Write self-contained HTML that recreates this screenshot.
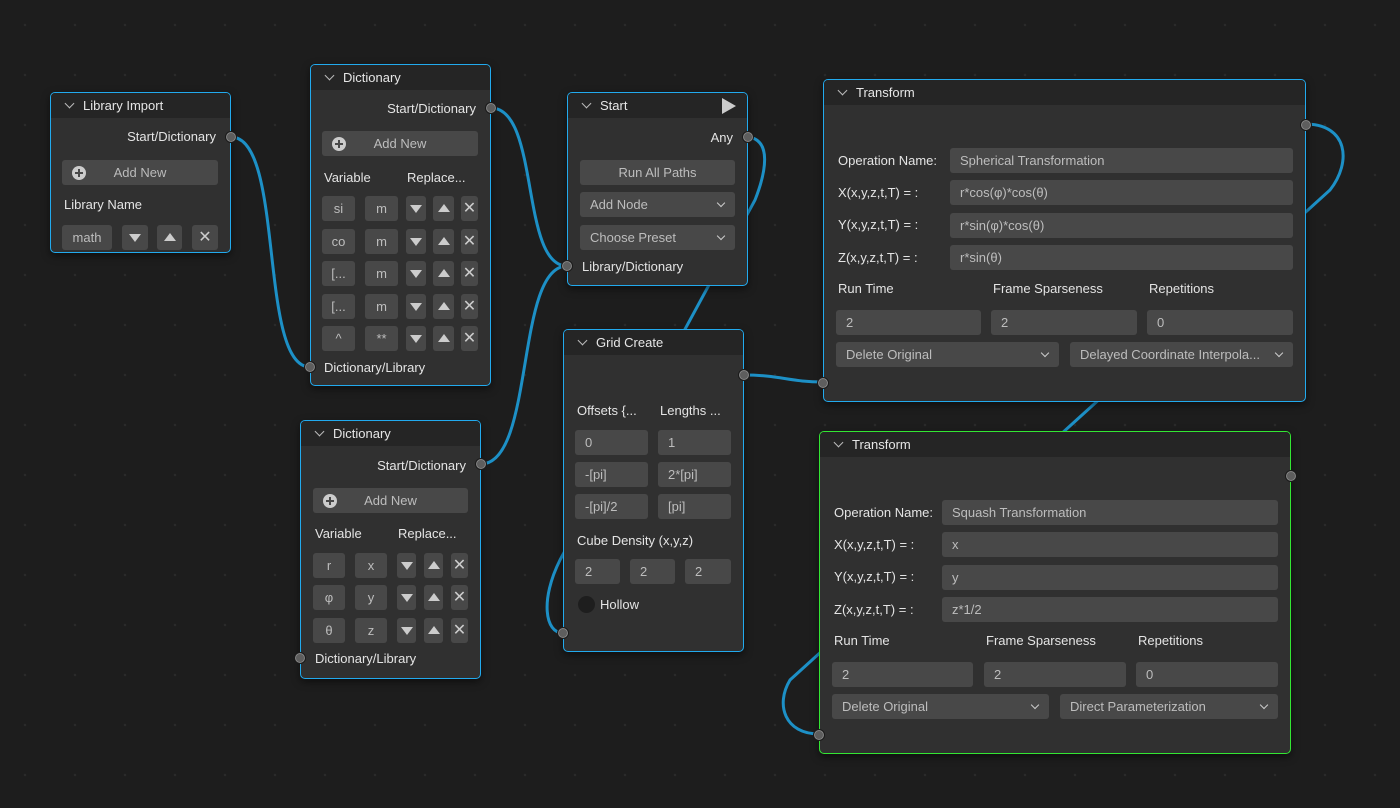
<!DOCTYPE html>
<html><head><meta charset="utf-8"><style>
*{box-sizing:border-box;margin:0;padding:0}
body{width:1400px;height:808px;overflow:hidden;background:#1d1d1d;background-image:radial-gradient(circle,#2a2a2a 1px,transparent 1.5px);background-size:50px 50px;background-position:0 0;font-family:"Liberation Sans","DejaVu Sans",sans-serif;font-size:13px;color:#e4e4e4;position:relative}
.n{position:absolute;background:#303030;border:1.5px solid #22aaee;border-radius:5px;box-shadow:0 3px 8px rgba(0,0,0,.5);overflow:visible}
.n.g{border-color:#33e633}
.h{position:absolute;left:0;right:0;top:0;height:25px;background:#252525;border-radius:4px 4px 0 0;line-height:25px;padding-left:32px;color:#e6e6e6}
.h:before{content:"";position:absolute;left:15px;top:7px;width:6px;height:6px;border-right:1.3px solid #bbb;border-bottom:1.3px solid #bbb;transform:rotate(45deg)}
.a{position:absolute;white-space:nowrap}
.f{position:absolute;background:#484848;border-radius:3px;height:25px;line-height:25px;color:#bdbdbd;padding-left:10px;white-space:nowrap;overflow:hidden}
.c{text-align:center;padding-left:0}
.dd:after{content:"";position:absolute;right:11px;top:8px;width:5px;height:5px;border-right:1.3px solid #ccc;border-bottom:1.3px solid #ccc;transform:rotate(45deg)}
.s{position:absolute;width:12px;height:12px;border-radius:50%;background:#5e5e5e;border:1.5px solid #1a1a1a;box-shadow:0 0 0 1px #888 inset}
.dn:after{content:"";position:absolute;left:50%;top:9px;margin-left:-6px;border-left:6px solid transparent;border-right:6px solid transparent;border-top:8px solid #ccc}
.up:after{content:"";position:absolute;left:50%;top:8px;margin-left:-6px;border-left:6px solid transparent;border-right:6px solid transparent;border-bottom:8px solid #ccc}
.x:after{content:"✕";position:absolute;left:0;right:0;text-align:center;color:#ccc;font-size:16px}
.plus{position:absolute;left:10px;top:6px;width:14px;height:14px;border-radius:50%;background:#ccc}
.plus:before,.plus:after{content:"";position:absolute;background:#484848;left:3px;top:6px;width:8px;height:2px}
.plus:after{left:6px;top:3px;width:2px;height:8px}
</style></head><body>
<svg width="1400" height="808" style="position:absolute;left:0;top:0" fill="none" stroke="#1d90c6" stroke-width="3">
<path d="M231,137 C285,137 258,367 310,367"/>
<path d="M491,108 C540,108 520,266 567,266"/>
<path d="M481,464 C535,464 515,266 567,266"/>
<path d="M748,137 C772,140 766,172 755,200 L560,560 C540,600 545,633 563,633"/>
<path d="M744,375 C780,375 790,382 823,382"/>
<path d="M1305,124 C1348,124 1352,162 1330,190 L790,680 C775,705 785,734 819,734"/>
</svg>

<!-- Library Import -->
<div class="n" style="left:50px;top:92px;width:181px;height:161px">
<div class="h">Library Import</div>
<div class="a" style="right:14px;top:36px">Start/Dictionary</div>
<div class="f c" style="left:11px;top:67px;width:156px;color:#bbb">Add New<span class="plus"></span></div>
<div class="a" style="left:13px;top:104px">Library Name</div>
<div class="f c" style="left:11px;top:132px;width:50px">math</div>
<div class="f dn" style="left:71px;top:132px;width:26px"></div>
<div class="f up" style="left:106px;top:132px;width:25px"></div>
<div class="f x" style="left:141px;top:132px;width:26px"></div>
<div class="s" style="left:174px;top:38px"></div>
</div>

<!-- Dictionary 1 -->
<div class="n" style="left:310px;top:64px;width:181px;height:322px">
<div class="h">Dictionary</div>
<div class="a" style="right:14px;top:36px">Start/Dictionary</div>
<div class="f c" style="left:11px;top:66px;width:156px">Add New<span class="plus"></span></div>
<div class="a" style="left:13px;top:105px">Variable</div>
<div class="a" style="left:96px;top:105px">Replace...</div>
<div class="f c" style="left:11px;top:131px;width:33px">si</div><div class="f c" style="left:54px;top:131px;width:33px">m</div><div class="f dn" style="left:95px;top:131px;width:20px"></div><div class="f up" style="left:122px;top:131px;width:21px"></div><div class="f x" style="left:150px;top:131px;width:17px"></div>
<div class="f c" style="left:11px;top:164px;width:33px">co</div><div class="f c" style="left:54px;top:164px;width:33px">m</div><div class="f dn" style="left:95px;top:164px;width:20px"></div><div class="f up" style="left:122px;top:164px;width:21px"></div><div class="f x" style="left:150px;top:164px;width:17px"></div>
<div class="f c" style="left:11px;top:196px;width:33px">[...</div><div class="f c" style="left:54px;top:196px;width:33px">m</div><div class="f dn" style="left:95px;top:196px;width:20px"></div><div class="f up" style="left:122px;top:196px;width:21px"></div><div class="f x" style="left:150px;top:196px;width:17px"></div>
<div class="f c" style="left:11px;top:229px;width:33px">[...</div><div class="f c" style="left:54px;top:229px;width:33px">m</div><div class="f dn" style="left:95px;top:229px;width:20px"></div><div class="f up" style="left:122px;top:229px;width:21px"></div><div class="f x" style="left:150px;top:229px;width:17px"></div>
<div class="f c" style="left:11px;top:261px;width:33px">^</div><div class="f c" style="left:54px;top:261px;width:33px">**</div><div class="f dn" style="left:95px;top:261px;width:20px"></div><div class="f up" style="left:122px;top:261px;width:21px"></div><div class="f x" style="left:150px;top:261px;width:17px"></div>
<div class="a" style="left:13px;top:295px">Dictionary/Library</div>
<div class="s" style="left:174px;top:37px"></div>
<div class="s" style="left:-7px;top:296px"></div>
</div>

<!-- Dictionary 2 -->
<div class="n" style="left:300px;top:420px;width:181px;height:259px">
<div class="h">Dictionary</div>
<div class="a" style="right:14px;top:37px">Start/Dictionary</div>
<div class="f c" style="left:12px;top:67px;width:155px">Add New<span class="plus"></span></div>
<div class="a" style="left:14px;top:105px">Variable</div>
<div class="a" style="left:97px;top:105px">Replace...</div>
<div class="f c" style="left:12px;top:132px;width:32px">r</div><div class="f c" style="left:54px;top:132px;width:32px">x</div><div class="f dn" style="left:96px;top:132px;width:19px"></div><div class="f up" style="left:123px;top:132px;width:19px"></div><div class="f x" style="left:150px;top:132px;width:17px"></div>
<div class="f c" style="left:12px;top:164px;width:32px">φ</div><div class="f c" style="left:54px;top:164px;width:32px">y</div><div class="f dn" style="left:96px;top:164px;width:19px"></div><div class="f up" style="left:123px;top:164px;width:19px"></div><div class="f x" style="left:150px;top:164px;width:17px"></div>
<div class="f c" style="left:12px;top:197px;width:32px">θ</div><div class="f c" style="left:54px;top:197px;width:32px">z</div><div class="f dn" style="left:96px;top:197px;width:19px"></div><div class="f up" style="left:123px;top:197px;width:19px"></div><div class="f x" style="left:150px;top:197px;width:17px"></div>
<div class="a" style="left:14px;top:230px">Dictionary/Library</div>
<div class="s" style="left:174px;top:37px"></div>
<div class="s" style="left:-7px;top:231px"></div>
</div>

<!-- Start -->
<div class="n" style="left:567px;top:92px;width:181px;height:194px">
<div class="h">Start</div>
<svg style="position:absolute;left:154px;top:5px" width="14" height="16"><path d="M0,0 L14,8 L0,16Z" fill="#ccc"/></svg>
<div class="a" style="right:14px;top:37px">Any</div>
<div class="f c" style="left:12px;top:67px;width:155px">Run All Paths</div>
<div class="f dd" style="left:12px;top:99px;width:155px">Add Node</div>
<div class="f dd" style="left:12px;top:132px;width:155px">Choose Preset</div>
<div class="a" style="left:14px;top:166px">Library/Dictionary</div>
<div class="s" style="left:174px;top:38px"></div>
<div class="s" style="left:-7px;top:167px"></div>
</div>

<!-- Grid Create -->
<div class="n" style="left:563px;top:329px;width:181px;height:323px">
<div class="h">Grid Create</div>
<div class="a" style="left:13px;top:73px">Offsets {...</div>
<div class="a" style="left:96px;top:73px">Lengths ...</div>
<div class="f" style="left:11px;top:100px;width:73px">0</div><div class="f" style="left:94px;top:100px;width:73px">1</div>
<div class="f" style="left:11px;top:132px;width:73px">-[pi]</div><div class="f" style="left:94px;top:132px;width:73px">2*[pi]</div>
<div class="f" style="left:11px;top:164px;width:73px">-[pi]/2</div><div class="f" style="left:94px;top:164px;width:73px">[pi]</div>
<div class="a" style="left:13px;top:203px">Cube Density (x,y,z)</div>
<div class="f" style="left:11px;top:229px;width:45px">2</div><div class="f" style="left:66px;top:229px;width:45px">2</div><div class="f" style="left:121px;top:229px;width:46px">2</div>
<div style="position:absolute;left:14px;top:266px;width:17px;height:17px;border-radius:50%;background:#1e1e1e"></div>
<div class="a" style="left:36px;top:267px">Hollow</div>
<div class="s" style="left:174px;top:39px"></div>
<div class="s" style="left:-7px;top:297px"></div>
</div>

<!-- Transform 1 -->
<div class="n" style="left:823px;top:79px;width:483px;height:323px">
<div class="h">Transform</div>
<div class="a" style="left:14px;top:73px">Operation Name:</div>
<div class="f" style="left:126px;top:68px;width:343px">Spherical Transformation</div>
<div class="a" style="left:14px;top:105px">X(x,y,z,t,T) = :</div>
<div class="f" style="left:126px;top:100px;width:343px">r*cos(φ)*cos(θ)</div>
<div class="a" style="left:14px;top:137px">Y(x,y,z,t,T) = :</div>
<div class="f" style="left:126px;top:133px;width:343px">r*sin(φ)*cos(θ)</div>
<div class="a" style="left:14px;top:170px">Z(x,y,z,t,T) = :</div>
<div class="f" style="left:126px;top:165px;width:343px">r*sin(θ)</div>
<div class="a" style="left:14px;top:201px">Run Time</div>
<div class="a" style="left:169px;top:201px">Frame Sparseness</div>
<div class="a" style="left:325px;top:201px">Repetitions</div>
<div class="f" style="left:12px;top:230px;width:145px">2</div>
<div class="f" style="left:167px;top:230px;width:146px">2</div>
<div class="f" style="left:323px;top:230px;width:146px">0</div>
<div class="f dd" style="left:12px;top:262px;width:223px">Delete Original</div>
<div class="f dd" style="left:246px;top:262px;width:223px;padding-right:24px">Delayed Coordinate Interpola...</div>
<div class="s" style="left:476px;top:39px"></div>
<div class="s" style="left:-7px;top:297px"></div>
</div>

<!-- Transform 2 -->
<div class="n g" style="left:819px;top:431px;width:472px;height:323px">
<div class="h">Transform</div>
<div class="a" style="left:14px;top:73px">Operation Name:</div>
<div class="f" style="left:122px;top:68px;width:336px">Squash Transformation</div>
<div class="a" style="left:14px;top:105px">X(x,y,z,t,T) = :</div>
<div class="f" style="left:122px;top:100px;width:336px">x</div>
<div class="a" style="left:14px;top:137px">Y(x,y,z,t,T) = :</div>
<div class="f" style="left:122px;top:133px;width:336px">y</div>
<div class="a" style="left:14px;top:170px">Z(x,y,z,t,T) = :</div>
<div class="f" style="left:122px;top:165px;width:336px">z*1/2</div>
<div class="a" style="left:14px;top:201px">Run Time</div>
<div class="a" style="left:166px;top:201px">Frame Sparseness</div>
<div class="a" style="left:318px;top:201px">Repetitions</div>
<div class="f" style="left:12px;top:230px;width:141px">2</div>
<div class="f" style="left:164px;top:230px;width:142px">2</div>
<div class="f" style="left:316px;top:230px;width:142px">0</div>
<div class="f dd" style="left:12px;top:262px;width:217px">Delete Original</div>
<div class="f dd" style="left:240px;top:262px;width:218px">Direct Parameterization</div>
<div class="s" style="left:465px;top:38px"></div>
<div class="s" style="left:-7px;top:297px"></div>
</div>
</body></html>
